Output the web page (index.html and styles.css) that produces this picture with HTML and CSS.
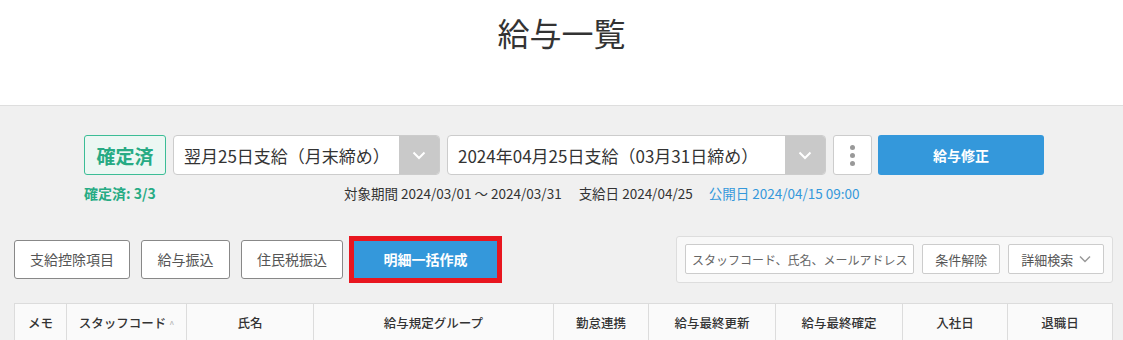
FILE: index.html
```html
<!DOCTYPE html>
<html lang="ja">
  <head>
    <meta charset="UTF-8" />
    <meta name="viewport" content="width=device-width, initial-scale=1.0" />
    <title>給与一覧</title>
    <link rel="stylesheet" href="styles.css">
  </head>
  <body>
    <div class="head">
      <h1 class="title">給与一覧</h1>
    </div>
    <div class="main">
      <div class="top flex">
        <div class="badge flex center">確定済</div>
        <div class="select sel1 flex">
          <span class="sel-text">翌月25日支給（月末締め）</span>
          <span class="sel-arrow flex center">
            <svg width="14" height="9" viewBox="0 0 14 9"><path d="M1.5 1.5 L7 7 L12.5 1.5" fill="none" stroke="#fff" stroke-width="2"/></svg>
          </span>
        </div>
        <div class="select sel2 flex">
          <span class="sel-text">2024年04月25日支給（03月31日締め）</span>
          <span class="sel-arrow flex center">
            <svg width="14" height="9" viewBox="0 0 14 9"><path d="M1.5 1.5 L7 7 L12.5 1.5" fill="none" stroke="#fff" stroke-width="2"/></svg>
          </span>
        </div>
        <div class="kebab flex column center">
          <i></i><i></i><i></i>
        </div>
        <button class="btn-blue fix">給与修正</button>
      </div>
      <div class="info flex">
        <div class="status">確定済: 3/3</div>
        <div class="period">対象期間 2024/03/01 〜 2024/03/31</div>
        <div class="payday">支給日 2024/04/25</div>
        <div class="open">公開日 2024/04/15 09:00</div>
      </div>
      <div class="tools flex space">
        <div class="actions flex">
          <button class="btn w1">支給控除項目</button>
          <button class="btn w2">給与振込</button>
          <button class="btn w3">住民税振込</button>
          <div class="mark">
            <button class="btn-blue bulk">明細一括作成</button>
          </div>
        </div>
        <div class="search flex">
          <input type="text" class="input" placeholder="スタッフコード、氏名、メールアドレス" />
          <button class="btn-s clear">条件解除</button>
          <button class="btn-s detail flex center">詳細検索
            <svg width="12" height="8" viewBox="0 0 12 8"><path d="M1 1.5 L6 6.5 L11 1.5" fill="none" stroke="#999" stroke-width="1.5"/></svg>
          </button>
        </div>
      </div>
      <table class="list">
        <colgroup>
          <col class="c-memo">
          <col class="c-code">
          <col class="c-name">
          <col class="c-group">
          <col class="c-sync">
          <col class="c-date">
          <col class="c-date">
          <col class="c-day">
          <col class="c-day">
        </colgroup>
        <thead>
          <tr>
            <th>メモ</th>
            <th>スタッフコード<span class="sort">^</span></th>
            <th>氏名</th>
            <th>給与規定グループ</th>
            <th>勤怠連携</th>
            <th>給与最終更新</th>
            <th>給与最終確定</th>
            <th>入社日</th>
            <th>退職日</th>
          </tr>
        </thead>
      </table>
    </div>
  </body>
</html>
```

FILE: styles.css
```css
* {
  margin: 0;
  padding: 0;
  box-sizing: border-box;
}
body {
  font-family: "Noto Sans CJK JP", "Noto Sans", sans-serif;
  color: #333;
  background-color: #f0f0f0;
  overflow: hidden;
}
.flex {
  display: flex;
}
.space {
  justify-content: space-between;
}
.center {
  justify-content: center;
  align-items: center;
}
.column {
  flex-direction: column;
}

.head {
  height: 106px;
  background-color: #fff;
  border-bottom: 1px solid #dedede;
}
.head .title {
  font-size: 32px;
  font-weight: 400;
  line-height: 40px;
  text-align: center;
  padding-top: 12px;
  color: #333;
}

.main {
  padding-top: 29px;
  height: 234px;
}
.main .top {
  width: 960px;
  margin-left: 84px;
  height: 40px;
  gap: 7px;
}
.main .top .badge {
  width: 82px;
  height: 40px;
  border: 1px solid #3bbd96;
  border-radius: 3px;
  background-color: #ecf7f3;
  color: #27ab84;
  font-size: 19px;
  font-weight: 700;
}
.main .top .select {
  height: 40px;
  background-color: #fff;
  border: 1px solid #ccc;
  border-radius: 4px;
  overflow: hidden;
  align-items: center;
}
.main .top .sel1 {
  width: 267px;
}
.main .top .sel2 {
  width: 379px;
}
.main .top .sel-text {
  flex: 1;
  padding-left: 10px;
  font-size: 17px;
  color: #333;
  white-space: nowrap;
}
.main .top .sel-arrow {
  width: 40px;
  height: 100%;
  background-color: #c9c9c9;
}
.main .top .kebab {
  width: 39px;
  height: 40px;
  background-color: #fff;
  border: 1px solid #ccc;
  border-radius: 3px;
  gap: 3px;
}
.main .top .kebab i {
  width: 5px;
  height: 5px;
  border-radius: 50%;
  background-color: #999;
}
.btn-blue {
  border: none;
  background-color: #3498db;
  color: #fff;
  font-family: inherit;
  font-size: 14px;
  font-weight: 700;
  border-radius: 3px;
}
.main .top .fix {
  width: 166px;
  height: 40px;
  margin-left: -1px;
}

.main .info {
  margin-top: 9px;
  margin-left: 84px;
  font-size: 13.5px;
  line-height: 18px;
  white-space: nowrap;
}
.main .info .status {
  width: 260px;
  color: #27ab84;
  font-weight: 700;
  font-size: 14px;
}
.main .info .payday {
  margin-left: 17px;
}
.main .info .open {
  margin-left: 16px;
  color: #3498db;
}

.main .tools {
  margin-top: 33px;
  padding: 0 10px 0 14px;
  height: 48px;
  align-items: center;
}
.main .tools .actions {
  align-items: center;
  gap: 11px;
}
.btn {
  height: 39px;
  background-color: #fff;
  border: 1px solid #888;
  border-radius: 3px;
  color: #555;
  font-family: inherit;
  font-size: 14px;
}
.w1 {
  width: 116px;
}
.w2 {
  width: 89px;
}
.w3 {
  width: 102px;
}
.main .tools .mark {
  margin-left: -5px;
  border: 5px solid #e8161f;
  height: 47px;
}
.main .tools .bulk {
  width: 143px;
  height: 37px;
  border-radius: 0;
}
.main .tools .search {
  width: 437px;
  height: 47px;
  background-color: #f8f8f8;
  border: 1px solid #ddd;
  border-radius: 3px;
  padding: 0 8px;
  align-items: center;
  gap: 8px;
}
.main .tools .search .input {
  width: 230px;
  height: 30px;
  border: 1px solid #ccc;
  border-radius: 2px;
  padding-left: 6px;
  font-family: inherit;
  font-size: 12px;
  background-color: #fff;
}
.main .tools .search .input::placeholder {
  color: #666;
}
.btn-s {
  height: 30px;
  background-color: #fff;
  border: 1px solid #ccc;
  border-radius: 2px;
  color: #555;
  font-family: inherit;
  font-size: 13px;
}
.clear {
  width: 78px;
}
.detail {
  width: 96px;
  gap: 6px;
}

.main .list {
  margin: 20px 0 0 14px;
  width: 1099px;
  table-layout: fixed;
  border-collapse: collapse;
  background-color: #fafafa;
}
.main .list .c-memo {
  width: 52px;
}
.main .list .c-code {
  width: 120px;
}
.main .list .c-name {
  width: 127px;
}
.main .list .c-group {
  width: 240px;
}
.main .list .c-sync {
  width: 95px;
}
.main .list .c-date {
  width: 127px;
}
.main .list .c-day {
  width: 105px;
}
.main .list th {
  height: 38px;
  border: 1px solid #dcdcdc;
  font-size: 12.5px;
  font-weight: 500;
  color: #333;
  white-space: nowrap;
}
.main .list .sort {
  margin-left: 3px;
  font-size: 9px;
  color: #bbb;
  vertical-align: middle;
}
```
